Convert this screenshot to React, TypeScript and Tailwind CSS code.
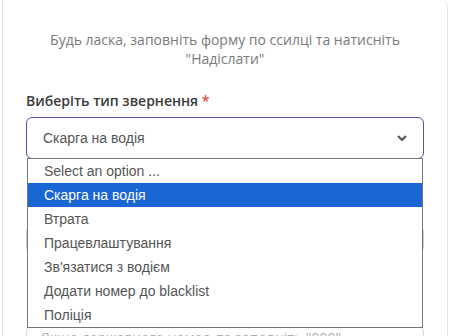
import React from 'react';

const options = [
  'Select an option ...',
  'Скарга на водія',
  'Втрата',
  'Працевлаштування',
  "Зв'язатися з водієм",
  'Додати номер до blacklist',
  'Поліція',
];

const App: React.FC = () => {
  const selected = 'Скарга на водія';

  return (
    <div className="w-[450px] h-[336px] overflow-hidden bg-white">
      <div className="ml-[2px] w-[446px] min-h-[400px] bg-white border-x border-[#e4e4e6] rounded-tr-lg px-[23px] pt-[30px] font-['Open_Sans',sans-serif]">
        {/* Intro */}
        <p className="text-center text-[14px] leading-[19px] text-[#7a7a7a] px-[20px]">
          Будь ласка, заповніть форму по ссилці та натисніть "Надіслати"
        </p>

        {/* Type select */}
        <label className="block mt-[23px] text-[14px] leading-[20px] font-semibold text-[#3b3b3b]">
          Виберіть тип звернення <span className="text-[#e0504a]">*</span>
        </label>
        <div className="relative mt-[6px]">
          <div className="flex items-center justify-between h-[42px] border border-[#5c50a0] rounded-[6px] bg-white pl-[16px] pr-[16px]">
            <span className="font-['Liberation_Sans',Arial,sans-serif] text-[14px] text-[#555]">{selected}</span>
            <svg width="10" height="7" viewBox="0 0 10 7" className="text-[#555]">
              <path d="M1.5 1.5 L5 5 L8.5 1.5" fill="none" stroke="currentColor" strokeWidth="2" strokeLinecap="round" strokeLinejoin="round" />
            </svg>
          </div>

          {/* Open dropdown list */}
          <ul className="absolute z-10 left-[1px] right-[1px] top-[41px] border border-[#767676] bg-white font-['Liberation_Sans',Arial,sans-serif] text-[14px]">
            {options.map(o => (
              <li
                key={o}
                className={`h-[24px] leading-[24px] pl-[16px] ${
                  o === selected ? 'bg-[#1a66d2] text-white' : 'text-[#555]'
                }`}
              >
                {o}
              </li>
            ))}
          </ul>
        </div>

        {/* Fields hidden behind the list */}
        <div className="mt-[67px] h-[27px] border border-[#d0d0d0] rounded-[6px]" />
        <div className="mt-[73px] h-[40px] border border-[#d8d8d8] rounded-[6px] pl-[14px] pt-[1px]">
          <span className="block text-[14px] leading-[20px] text-[#b0b0b0]">Якщо державного немає, то заповніть "000"</span>
        </div>
      </div>
    </div>
  );
};

export default App;
